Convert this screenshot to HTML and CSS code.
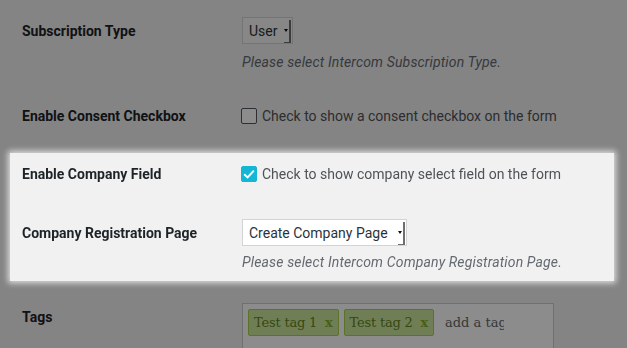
FILE: index.html
```html
<!DOCTYPE html>
<html lang="en">
<head>
<meta charset="utf-8">
<title>Intercom settings</title>
<link rel="stylesheet" href="styles.css">
</head>
<body>
<div class="form">
  <div class="row r1">
    <div class="th">Subscription Type</div>
    <div class="td">
      <span class="select sel-user">User</span>
      <p class="description d1">Please select Intercom Subscription Type.</p>
    </div>
  </div>
  <div class="row r2 check-row">
    <div class="th">Enable Consent Checkbox</div>
    <label class="td check"><span class="cb"></span>Check to show a consent checkbox on the form</label>
  </div>
  <div class="highlight">
    <div class="row r3 check-row">
      <div class="th">Enable Company Field</div>
      <label class="td check"><span class="cb checked"><svg viewBox="0 0 16 16" width="16" height="16"><path d="M3.2 8.2 L6.6 11.4 L12.8 4.6" fill="none" stroke="#fff" stroke-width="2"/></svg></span>Check to show company select field on the form</label>
    </div>
    <div class="row r4">
      <div class="th">Company Registration Page</div>
      <div class="td">
        <span class="select sel-page">Create Company Page</span>
        <p class="description d4">Please select Intercom Company Registration Page.</p>
      </div>
    </div>
  </div>
  <div class="row r5">
    <div class="th">Tags</div>
    <div class="td">
      <div class="tagsinput">
        <span class="tag"><span>Test tag 1&nbsp;&nbsp;</span><a href="#">x</a></span>
        <span class="tag"><span>Test tag 2&nbsp;&nbsp;</span><a href="#">x</a></span>
        <span class="tag-input">add a tag</span>
      </div>
    </div>
  </div>
</div>
<div class="overlay"></div>
</body>
</html>
```
FILE: styles.css
```css
html, body {
  margin: 0;
  padding: 0;
}
body {
  background: #f1f1f1;
  font-family: Roboto, "Noto Sans", sans-serif;
  font-size: 14px;
  color: #3c434a;
  overflow: hidden;
  height: 348px;
}
.form {
  width: 604px;
  margin-left: 10px;
  padding-top: 17px;
}
.row {
  display: grid;
  grid-template-columns: 220px 1fr;
  padding-left: 12px;
  align-items: start;
}
.th {
  font-weight: 700;
  color: #1d2327;
  line-height: 20px;
  padding-top: 4px;
}
.td {
  min-width: 0;
}
.select {
  position: relative;
  display: inline-flex;
  align-items: center;
  box-sizing: border-box;
  height: 27px;
  border: 1px solid #d4d4d4;
  background: #fff;
  color: #2c3338;
  padding: 0 0 0 6px;
}
.sel-user {
  width: 51px;
  background: #f6f6f6;
}
.sel-page {
  width: 165px;
}
.select::before {
  content: "";
  position: absolute;
  right: 1px;
  top: 2px;
  bottom: 0;
  width: 5px;
  border-right: 2px solid #6e6e6e;
  border-bottom: 1px solid #6e6e6e;
}
.select::after {
  content: "";
  position: absolute;
  right: 4px;
  top: 11px;
  border-left: 2px solid transparent;
  border-right: 2px solid transparent;
  border-top: 3px solid #111;
}
.description {
  margin: 0;
  font-size: 14px;
  letter-spacing: 0.15px;
  line-height: 18px;
  font-style: italic;
  color: #646970;
}
.d1 { margin-top: 9px; }
.d4 { margin-top: 7px; }
.check-row {
  align-items: center;
  padding-top: 0;
}
.check-row .th {
  padding-top: 0;
}
.r2 { margin-top: 35px; }
.check {
  display: flex;
  align-items: center;
  line-height: 20px;
  color: #4f5358;
}
.cb {
  box-sizing: border-box;
  width: 16px;
  height: 16px;
  margin-left: -1px;
  margin-right: 5px;
  border: 1px solid #50575e;
  border-radius: 2px;
  background: #fff;
  flex: none;
}
.cb.checked {
  border-color: #15b6d3;
  background: #15b6d3;
}
.cb svg {
  display: block;
  margin: -1px;
}
.highlight {
  position: relative;
  z-index: 2;
  margin-top: 27px;
  padding: 11px 0 10px;
  background: #f1f1f1;
  box-shadow: 0 0 6px 2px rgba(255, 255, 255, 0.75);
}
.r4 { margin-top: 35px; }
.r5 { margin-top: 22px; }
.tagsinput {
  width: 300px;
  height: 100px;
  padding: 5px;
  border: 1px solid #ccc;
  background: #fff;
  overflow: hidden;
}
.tag {
  float: left;
  border: 1px solid #a5d24a;
  border-radius: 2px;
  padding: 5px;
  margin: 0 5px 5px 0;
  background: #cde69c;
  color: #638421;
  font-family: "DejaVu Serif", serif;
  font-size: 13px;
  letter-spacing: -0.2px;
  line-height: 15px;
}
.tag a {
  font-weight: bold;
  color: #82ad2b;
  text-decoration: none;
}
.tag-input {
  float: left;
  width: 54px;
  overflow: hidden;
  white-space: nowrap;
  border: 1px solid transparent;
  padding: 5px;
  margin: 0 5px 5px 0;
  font-family: "DejaVu Serif", serif;
  font-size: 13px;
  line-height: 15px;
  color: #666;
}
.overlay {
  position: fixed;
  inset: 0;
  background: rgba(0, 0, 0, 0.45);
  z-index: 1;
}
```
